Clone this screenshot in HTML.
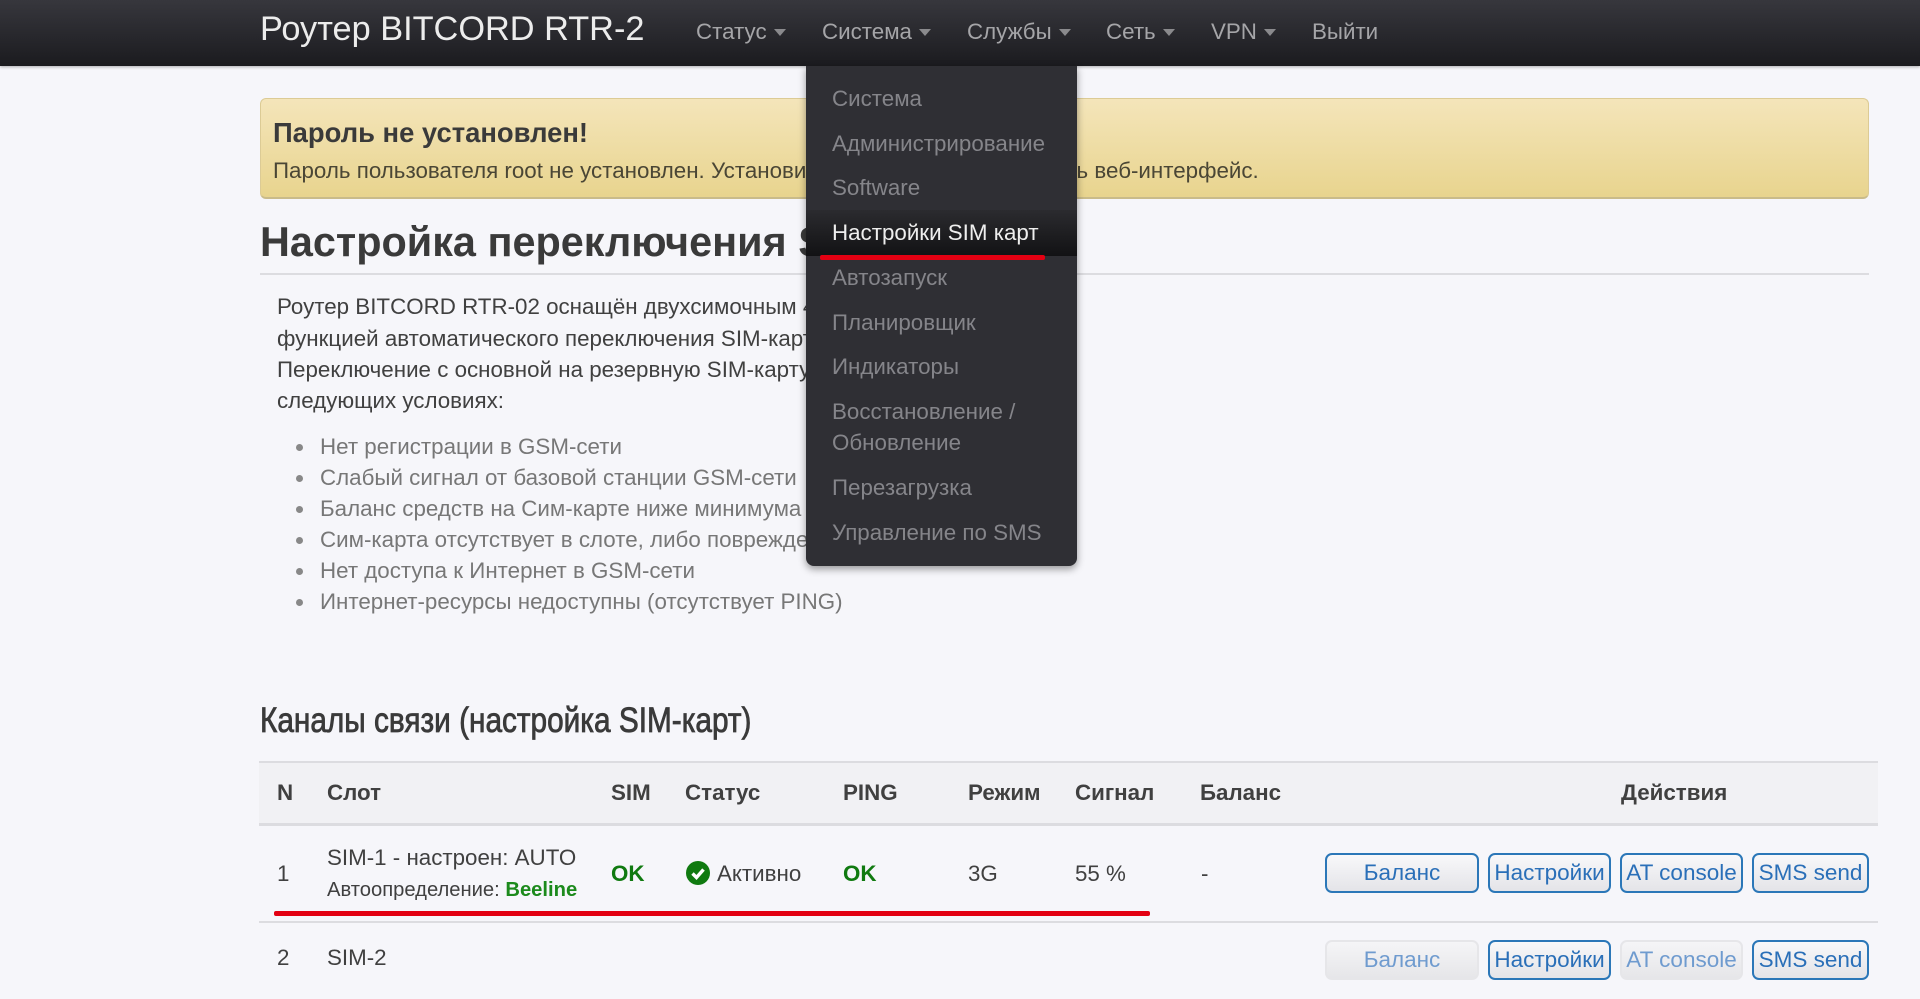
<!DOCTYPE html>
<html lang="ru"><head><meta charset="utf-8"><title>Роутер BITCORD RTR-2</title>
<style>
html,body{margin:0;padding:0;width:1920px;height:999px;overflow:hidden;background:#f6f6fa}
body{position:relative;font-family:"Liberation Sans",sans-serif;font-size:22.35px;color:#404040}
.t{position:absolute;white-space:nowrap;line-height:30px}
.b{font-weight:bold}
.g{color:#777}
.nav{position:absolute;left:0;top:0;width:1920px;height:66px;background:linear-gradient(#37373d,#1b1b1f);box-shadow:0 1px 3px rgba(0,0,0,.3)}
.n{color:#a5a5a8}
.n i{display:inline-block;width:0;height:0;border:6px solid transparent;border-top:7px solid #8a8a8d;border-bottom:0;margin-left:1px;vertical-align:middle;position:relative;top:-1px}
.alert{position:absolute;left:260px;top:98px;width:1607px;height:98px;border:1px solid #dccb95;border-bottom:2px solid #c9bb8a;border-radius:6px;background:linear-gradient(#f4e5ba,#e8d48e)}
.ln{position:absolute;background:#dcdce0}
.menu{position:absolute;left:806px;top:66px;width:271px;height:500px;background:#2f2f34;border-radius:0 0 8px 8px;box-shadow:0 3px 8px rgba(0,0,0,.4)}
.act{position:absolute;left:806px;top:210px;width:271px;height:46px;background:linear-gradient(#2b2b2f,#121214)}
.m{color:#85858a}
.red{position:absolute;background:#e30012;border-radius:2px}
.dot{position:absolute;left:296px;width:7px;height:7px;border-radius:50%;background:#888}
.th{position:absolute;left:259px;top:761px;width:1619px;height:65px;background:#f1f1f4;border-top:2px solid #dcdce0;border-bottom:3px solid #dcdce0;box-sizing:border-box}
.btn{position:absolute;box-sizing:border-box;height:40px;line-height:36px;text-align:center;border:2px solid #2b77b8;border-radius:7px;background:linear-gradient(#f8f8fa,#e4e4e8);color:#2a6fb8;white-space:nowrap;font-size:22.5px}
.dis{border-color:#e6e6e9;color:#6f9bcf;background:linear-gradient(#f5f5f7,#e6e6e9)}
.ok{color:#107a10;font-weight:bold}
</style></head><body>

<div class="nav"></div>
<div class="t" style="left:260px;top:14px;font-size:34.3px;color:#ececec">Роутер BITCORD RTR-2</div>
<div class="t n" style="left:696px;top:17px">Статус <i></i></div>
<div class="t n" style="left:822px;top:17px">Система <i></i></div>
<div class="t n" style="left:967px;top:17px">Службы <i></i></div>
<div class="t n" style="left:1106px;top:17px">Сеть <i></i></div>
<div class="t n" style="left:1211px;top:17px">VPN <i></i></div>
<div class="t n" style="left:1312px;top:17px">Выйти</div>

<div class="alert"></div>
<div class="t b" style="left:273px;top:118px;font-size:27.4px;color:#3a3a3a">Пароль не установлен!</div>
<div class="t" style="left:273px;top:156px;color:#4a4635">Пароль пользователя root не установлен. Установите пароль, чтобы защитить веб-интерфейс.</div>

<div class="t b" style="left:260px;top:227px;font-size:41.4px;color:#3a3a3a">Настройка переключения SIM</div>
<div class="ln" style="left:260px;top:273px;width:1609px;height:2px"></div>

<div class="t" style="left:277px;top:292px">Роутер BITCORD RTR-02 оснащён двухсимочным 4G</div>
<div class="t" style="left:277px;top:324px">функцией автоматического переключения SIM-карт</div>
<div class="t" style="left:277px;top:355px">Переключение с основной на резервную SIM-карту</div>
<div class="t" style="left:277px;top:386px">следующих условиях:</div>

<div class="dot" style="top:444px"></div><div class="t g" style="left:320px;top:432px">Нет регистрации в GSM-сети</div>
<div class="dot" style="top:475px"></div><div class="t g" style="left:320px;top:463px">Слабый сигнал от базовой станции GSM-сети</div>
<div class="dot" style="top:506px"></div><div class="t g" style="left:320px;top:494px">Баланс средств на Сим-карте ниже минимума</div>
<div class="dot" style="top:537px"></div><div class="t g" style="left:320px;top:525px">Сим-карта отсутствует в слоте, либо повреждена</div>
<div class="dot" style="top:568px"></div><div class="t g" style="left:320px;top:556px">Нет доступа к Интернет в GSM-сети</div>
<div class="dot" style="top:599px"></div><div class="t g" style="left:320px;top:587px">Интернет-ресурсы недоступны (отсутствует PING)</div>

<div class="menu"></div>
<div class="act"></div>
<div class="t m" style="left:832px;top:84px">Система</div>
<div class="t m" style="left:832px;top:129px">Администрирование</div>
<div class="t m" style="left:832px;top:173px">Software</div>
<div class="t" style="left:832px;top:218px;color:#eee">Настройки SIM карт</div>
<div class="t m" style="left:832px;top:263px">Автозапуск</div>
<div class="t m" style="left:832px;top:308px">Планировщик</div>
<div class="t m" style="left:832px;top:352px">Индикаторы</div>
<div class="t m" style="left:832px;top:397px">Восстановление /</div>
<div class="t m" style="left:832px;top:428px">Обновление</div>
<div class="t m" style="left:832px;top:473px">Перезагрузка</div>
<div class="t m" style="left:832px;top:518px">Управление по SMS</div>
<div class="red" style="left:820px;top:255px;width:225px;height:5px"></div>

<div class="t" style="left:260px;top:706px;font-size:35px;color:#3a3a3a;transform:scaleX(.851);transform-origin:0 50%;-webkit-text-stroke:.8px #3a3a3a">Каналы связи (настройка SIM-карт)</div>

<div class="th"></div>
<div class="t b" style="left:277px;top:778px">N</div>
<div class="t b" style="left:327px;top:778px">Слот</div>
<div class="t b" style="left:611px;top:778px">SIM</div>
<div class="t b" style="left:685px;top:778px">Статус</div>
<div class="t b" style="left:843px;top:778px">PING</div>
<div class="t b" style="left:968px;top:778px">Режим</div>
<div class="t b" style="left:1075px;top:778px">Сигнал</div>
<div class="t b" style="left:1200px;top:778px">Баланс</div>
<div class="t b" style="left:1621px;top:778px">Действия</div>

<div class="t" style="left:277px;top:859px">1</div>
<div class="t" style="left:327px;top:843px">SIM-1 - настроен: AUTO</div>
<div class="t" style="left:327px;top:875px;font-size:20.2px">Автоопределение: <span class="ok" style="color:#1c8a1c">Beeline</span></div>
<div class="t ok" style="left:611px;top:859px">OK</div>
<svg style="position:absolute;left:686px;top:861px" width="24" height="24" viewBox="0 0 24 24"><circle cx="12" cy="12" r="12" fill="#107a10"/><path d="M6.5 12.5l4 4 7-8" fill="none" stroke="#fff" stroke-width="3.4"/></svg>
<div class="t" style="left:717px;top:859px">Активно</div>
<div class="t ok" style="left:843px;top:859px">OK</div>
<div class="t" style="left:968px;top:859px">3G</div>
<div class="t" style="left:1075px;top:859px">55 %</div>
<div class="t" style="left:1201px;top:859px">-</div>

<div class="btn" style="left:1325px;top:853px;width:154px">Баланс</div>
<div class="btn" style="left:1488px;top:853px;width:123px">Настройки</div>
<div class="btn" style="left:1620px;top:853px;width:123px">AT console</div>
<div class="btn" style="left:1752px;top:853px;width:117px">SMS send</div>

<div class="red" style="left:274px;top:911px;width:876px;height:5px"></div>
<div class="ln" style="left:259px;top:921px;width:1619px;height:2px"></div>

<div class="t" style="left:277px;top:943px">2</div>
<div class="t" style="left:327px;top:943px">SIM-2</div>
<div class="btn dis" style="left:1325px;top:940px;width:154px">Баланс</div>
<div class="btn" style="left:1488px;top:940px;width:123px">Настройки</div>
<div class="btn dis" style="left:1620px;top:940px;width:123px">AT console</div>
<div class="btn" style="left:1752px;top:940px;width:117px">SMS send</div>

</body></html>
